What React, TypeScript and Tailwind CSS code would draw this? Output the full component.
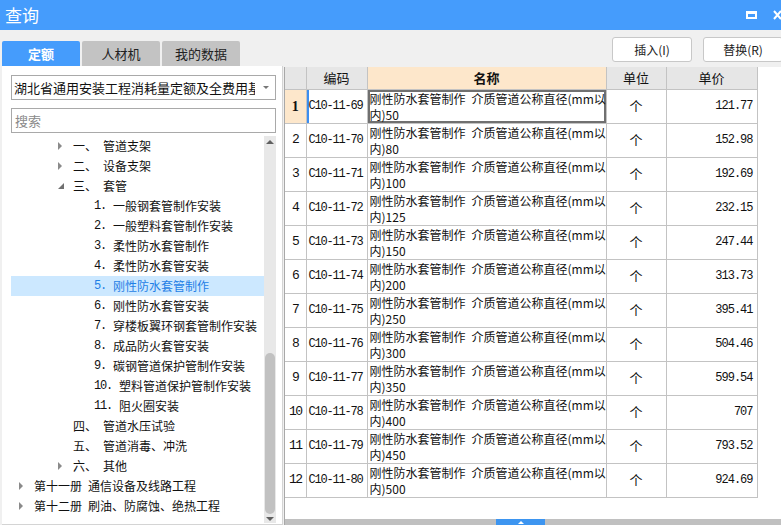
const rows: [string, string, string][] = [
  ['C10-11-69', '50', '121.77'],
  ['C10-11-70', '80', '152.98'],
  ['C10-11-71', '100', '192.69'],
  ['C10-11-72', '125', '232.15'],
  ['C10-11-73', '150', '247.44'],
  ['C10-11-74', '200', '313.73'],
  ['C10-11-75', '250', '395.41'],
  ['C10-11-76', '300', '504.46'],
  ['C10-11-77', '350', '599.54'],
  ['C10-11-78', '400', '707'],
  ['C10-11-79', '450', '793.52'],
  ['C10-11-80', '500', '924.69'],
];

type TreeRow = {
  level: 0 | 1 | 2;
  arrow?: 'right' | 'down';
  prefix: string;
  text: string;
  selected?: boolean;
};

const tree: TreeRow[] = [
  { level: 1, arrow: 'right', prefix: '一、', text: '管道支架' },
  { level: 1, arrow: 'right', prefix: '二、', text: '设备支架' },
  { level: 1, arrow: 'down', prefix: '三、', text: '套管' },
  { level: 2, prefix: '1.', text: '一般钢套管制作安装' },
  { level: 2, prefix: '2.', text: '一般塑料套管制作安装' },
  { level: 2, prefix: '3.', text: '柔性防水套管制作' },
  { level: 2, prefix: '4.', text: '柔性防水套管安装' },
  { level: 2, prefix: '5.', text: '刚性防水套管制作', selected: true },
  { level: 2, prefix: '6.', text: '刚性防水套管安装' },
  { level: 2, prefix: '7.', text: '穿楼板翼环钢套管制作安装' },
  { level: 2, prefix: '8.', text: '成品防火套管安装' },
  { level: 2, prefix: '9.', text: '碳钢管道保护管制作安装' },
  { level: 2, prefix: '10.', text: '塑料管道保护管制作安装' },
  { level: 2, prefix: '11.', text: '阻火圈安装' },
  { level: 1, prefix: '四、', text: '管道水压试验' },
  { level: 1, prefix: '五、', text: '管道消毒、冲洗' },
  { level: 1, arrow: 'right', prefix: '六、', text: '其他' },
  { level: 0, arrow: 'right', prefix: '第十一册', text: '通信设备及线路工程' },
  { level: 0, arrow: 'right', prefix: '第十二册', text: '刷油、防腐蚀、绝热工程' },
];

const levelPad = ['pl-[8px]', 'pl-[47px]', 'pl-[68px]'];

function Arrow({ dir }: { dir?: 'right' | 'down' }) {
  if (dir === 'right')
    return (
      <svg width="5" height="8" viewBox="0 0 5 8">
        <path d="M0 0 L4 4 L0 8 Z" fill="#8a8a8a" />
      </svg>
    );
  if (dir === 'down')
    return (
      <svg width="6" height="6" viewBox="0 0 6 6">
        <path d="M6 0 L6 6 L0 6 Z" fill="#707070" />
      </svg>
    );
  return null;
}

function TreeItem({ row }: { row: TreeRow }) {
  const mono = row.level === 2;
  return (
    <div
      className={`flex h-[20px] items-center text-[12px] whitespace-nowrap ${levelPad[row.level]} ${
        row.selected ? 'bg-[#cce8ff] text-[#1f7fe6]' : 'text-[#111]'
      }`}
    >
      <div className="flex w-[15px] shrink-0 items-center">
        <Arrow dir={row.arrow} />
      </div>
      {mono ? (
        <span className="font-['Liberation_Mono',monospace] text-[12px] tracking-[-1.2px]">
          {row.prefix}&nbsp;
        </span>
      ) : (
        <span>{row.prefix}</span>
      )}
      <span className={mono ? 'ml-[1px]' : 'ml-[6px]'}>{row.text}</span>
    </div>
  );
}

export default function App() {
  return (
    <div className="flex h-[525px] w-[781px] flex-col overflow-hidden bg-[#f0f0f0] font-['Noto_Sans_CJK_SC',sans-serif] text-[#111]">
      {/* Title bar */}
      <div className="flex h-[30px] shrink-0 items-center justify-between bg-[#459cfc] pl-[5px]">
        <span className="text-[17px] text-white">查询</span>
        <div className="flex items-center gap-[16px] pr-0">
          <div className="h-[8px] w-[11px] border-2 border-t-[3px] border-white" />
          <svg width="9" height="10" viewBox="0 0 9 10" className="-mr-[1px]">
            <path d="M1 1 L8 9 M8 1 L1 9" stroke="white" strokeWidth="2" />
          </svg>
        </div>
      </div>

      {/* Tabs + buttons */}
      <div className="flex h-[36px] shrink-0 justify-between">
        <div className="flex items-end gap-[2px] pl-[2px]">
          <div className="flex h-[25px] w-[78px] items-center justify-center rounded-t-[2px] bg-[#459cfc] text-[13px] font-bold text-white">
            定额
          </div>
          <div className="flex h-[25px] w-[78px] items-center justify-center rounded-t-[2px] bg-[#c3c3c3] text-[13px] text-[#222]">
            人材机
          </div>
          <div className="flex h-[25px] w-[78px] items-center justify-center rounded-t-[2px] bg-[#c3c3c3] text-[13px] text-[#222]">
            我的数据
          </div>
        </div>
        <div className="flex items-start gap-[11px] pt-[7px]">
          <button className="flex h-[25px] w-[80px] items-center justify-center rounded-[3px] border border-[#c8c8c8] bg-white text-[12px] text-[#222]">
            插入(I)
          </button>
          <button className="-mr-[2px] flex h-[25px] w-[80px] items-center justify-center rounded-[3px] border border-[#c8c8c8] bg-white text-[12px] text-[#222]">
            替换(R)
          </button>
        </div>
      </div>

      {/* Main */}
      <div className="flex min-h-0 flex-1">
        {/* Left panel */}
        <div className="ml-[2px] flex w-[281px] shrink-0 flex-col border-r border-b border-[#d4d4d4] bg-white pl-[9px] pr-[6px] pt-[9px]">
          <div className="flex h-[25px] items-center border border-[#a9a9a9] pl-[2px] pr-[6px]">
            <span className="min-w-0 flex-1 overflow-hidden text-[13px] whitespace-nowrap">
              湖北省通用安装工程消耗量定额及全费用基价表
            </span>
            <svg width="6" height="3" viewBox="0 0 6 3" className="ml-[8px] shrink-0">
              <path d="M0 0 L6 0 L3 3 Z" fill="#777" />
            </svg>
          </div>
          <div className="mt-[8px] flex h-[25px] items-center border border-[#a9a9a9] pl-[3px] text-[13px] text-[#8a8a8a]">
            搜索
          </div>
          <div className="mt-[3px] flex min-h-0 flex-1 pb-[1px]">
            <div className="flex-1 overflow-hidden">
              {tree.map((r, i) => (
                <TreeItem key={i} row={r} />
              ))}
            </div>
            <div className="flex w-[12px] shrink-0 flex-col items-center bg-[#e8e8e8] pt-[4px]">
              <svg width="8" height="4" viewBox="0 0 8 4">
                <path d="M0 4 L4 0 L8 4 Z" fill="#606060" />
              </svg>
              <div className="flex-1" />
              <div className="h-[161px] w-[10px] rounded-full bg-[#c1c1c1]" />
              <svg width="8" height="4" viewBox="0 0 8 4" className="mb-[2px] mt-[3px]">
                <path d="M0 0 L8 0 L4 4 Z" fill="#606060" />
              </svg>
            </div>
          </div>
        </div>

        {/* Right panel */}
        <div className="ml-[1px] mt-[1px] flex min-w-0 flex-1 flex-col border-l border-[#a8a8a8] bg-white">
          <div className="flex-1 overflow-hidden">
            <table className="w-[472px] table-fixed border-collapse text-[12px]">
              <colgroup>
                <col className="w-[21px]" />
                <col className="w-[61px]" />
                <col className="w-[239px]" />
                <col className="w-[60px]" />
                <col className="w-[91px]" />
              </colgroup>
              <thead>
                <tr className="h-[22px] text-[13px]">
                  <th className="border border-t-0 border-l-0 border-[#c3c3c3] bg-[#e6e6e6]" />
                  <th className="border border-t-0 border-[#c3c3c3] bg-[#e6e6e6] font-normal">编码</th>
                  <th className="border border-t-0 border-[#c3c3c3] bg-[#fde7cb] font-bold">名称</th>
                  <th className="border border-t-0 border-[#c3c3c3] bg-[#e6e6e6] font-normal">单位</th>
                  <th className="border border-t-0 border-[#c3c3c3] bg-[#e6e6e6] font-normal">单价</th>
                </tr>
              </thead>
              <tbody>
                {rows.map(([code, size, price], i) => {
                  const sel = i === 0;
                  return (
                    <tr key={code} className="h-[33px]">
                      <td
                        className={`border border-l-0 border-[#c3c3c3] p-0 text-center ${
                          sel
                            ? "bg-[#fde7cb] font-['Liberation_Serif',serif] text-[14px] font-bold"
                            : "font-['Liberation_Mono',monospace] text-[13px] tracking-[-1.5px]"
                        }`}
                      >
                        {i + 1}
                      </td>
                      <td
                        className={`border border-[#c3c3c3] py-0 pl-[2px] pr-0 font-['Liberation_Mono',monospace] text-[12px] tracking-[-1.2px] whitespace-nowrap ${
                          sel ? 'shadow-[inset_2px_0_0_#3d8ef0]' : ''
                        }`}
                      >
                        {code}
                      </td>
                      <td
                        className={`border border-[#c3c3c3] px-[2px] pb-0 pt-[1px] align-top leading-[16px] whitespace-nowrap ${
                          sel ? 'shadow-[inset_0_0_0_2px_#707070]' : ''
                        }`}
                      >
                        <div>
                          刚性防水套管制作<span className="inline-block w-[6px]" />介质管道公称直径(mm以
                        </div>
                        <div>内){size}</div>
                      </td>
                      <td className="border border-[#c3c3c3] p-0 text-center text-[13px]">个</td>
                      <td className="border border-[#c3c3c3] py-0 pl-0 pr-[4px] text-right font-['Liberation_Mono',monospace] text-[12px] tracking-[-1px]">
                        {price}
                      </td>
                    </tr>
                  );
                })}
              </tbody>
            </table>
          </div>
          <div className="flex h-[6px] shrink-0 justify-center bg-[#c0c0c0]">
            <div className="ml-[-25px] flex w-[49px] items-center justify-center bg-[#3d95f0]">
              <svg width="6" height="3" viewBox="0 0 6 3">
                <path d="M0 3 L3 0 L6 3 Z" fill="white" />
              </svg>
            </div>
          </div>
        </div>
      </div>
    </div>
  );
}
